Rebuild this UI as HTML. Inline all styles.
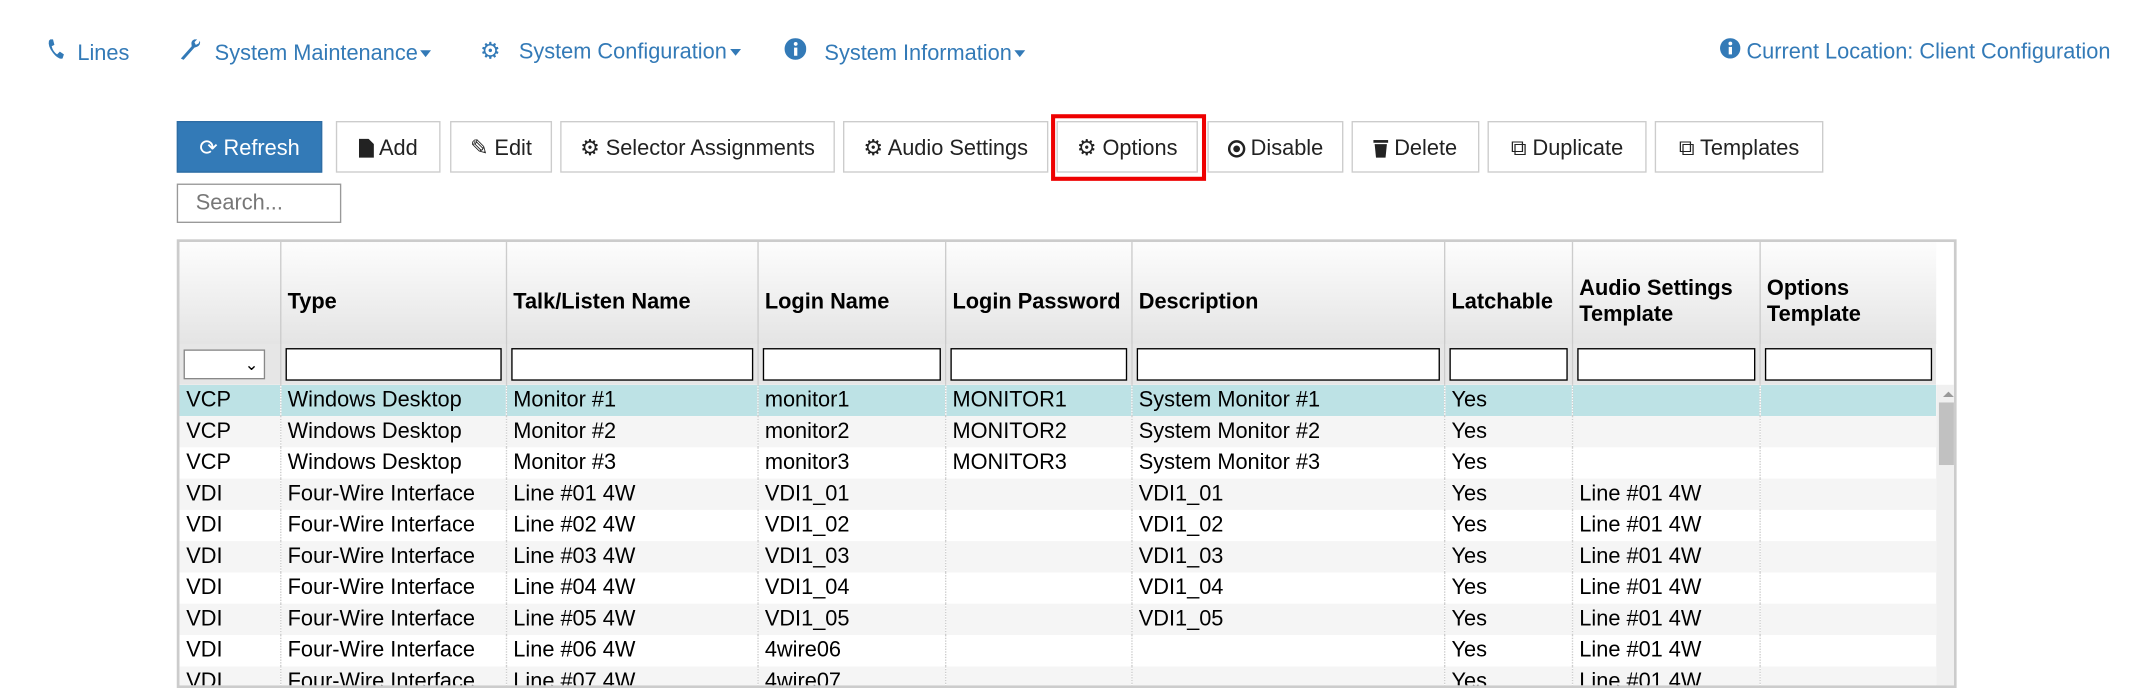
<!DOCTYPE html>
<html><head><meta charset="utf-8"><style>
html,body{margin:0;padding:0;background:#fff;overflow:hidden;width:2132px;height:678px}
#w{position:absolute;left:0;top:0;width:1568px;height:499px;transform:scale(1.3597);transform-origin:0 0;font-family:"Liberation Sans",sans-serif;font-size:16px;color:#000}
.a{position:absolute;color:#337ab7;white-space:nowrap;top:28px;line-height:20px}
.car{display:inline-block;width:0;height:0;border-left:4px solid transparent;border-right:4px solid transparent;border-top:5px solid #337ab7;vertical-align:middle;margin-left:2px}
.b{position:absolute;top:89px;height:38px;box-sizing:border-box;border:1px solid #ccc;background:#fff;line-height:39px;text-align:center;white-space:nowrap;color:#222}
.b svg{vertical-align:-2px;margin-right:4px}
table{border-collapse:collapse;table-layout:fixed}
td{padding:0 0 0 5px;height:23px;line-height:23px;white-space:nowrap;overflow:hidden;border-left:1px dotted #ccc}
th{font-weight:bold;text-align:left;padding:13px 5px 0;height:62px;border-left:1px solid #ccc;background:linear-gradient(#fdfdfd,#e4e4e4);line-height:19px;vertical-align:middle}
.f td{height:30px;background:#e6e6e6;border-left:1px solid #ccc;padding:0 3px}
.f input{width:100%;box-sizing:border-box;height:24px;border:1px solid #000;display:block}
tr.g td{background:#f5f5f5}
tr.h td{background:#bde2e5}
</style></head><body><div id="w">
<div class="a" style="left:34px"><svg width="14" height="16" viewBox="0 0 14 16"><path d="M3 1 L5 1 6 5 4 6 Q5 10 8 12 L10 10 13 12 12 15 Q9 16 5 11 Q1 6 2 2Z" fill="#337ab7"/></svg>&nbsp;&nbsp;Lines</div>
<div class="a" style="left:131px"><svg width="18" height="16" viewBox="0 0 18 16"><path d="M2 15 L10 6 Q9 2 12 1 L14 1 12 3 13 5 15 4 16 2 Q17 6 12 7 L4 16Z" fill="#337ab7"/></svg>&nbsp; System Maintenance<span class="car"></span></div>
<div class="a" style="left:353px"><span style="font-size:17px">⚙</span>&nbsp;&nbsp; System Configuration<span class="car"></span></div>
<div class="a" style="left:577px"><svg width="16" height="16"><circle cx="8" cy="8" r="8" fill="#337ab7"/><rect x="7" y="7" width="2.4" height="6" fill="#fff"/><circle cx="8.2" cy="4.3" r="1.4" fill="#fff"/></svg>&nbsp;&nbsp; System Information<span class="car"></span></div>
<div class="a" style="left:1265px"><svg width="15" height="15"><circle cx="7.5" cy="7.5" r="7.5" fill="#337ab7"/><rect x="6.4" y="6.5" width="2.4" height="5.5" fill="#fff"/><circle cx="7.6" cy="4" r="1.4" fill="#fff"/></svg> Current Location: Client Configuration</div>

<div class="b" style="left:130px;width:107px;background:#337ab7;border-color:#2e6da4;color:#fff">⟳ Refresh</div>
<div class="b" style="left:247px;width:77px"><svg width="11" height="14"><path d="M0 0H7L11 4V14H0Z" fill="#222"/></svg>Add</div>
<div class="b" style="left:331px;width:75px">✎ Edit</div>
<div class="b" style="left:412px;width:202px">⚙ Selector Assignments</div>
<div class="b" style="left:620px;width:151px">⚙ Audio Settings</div>
<div style="position:absolute;left:773px;top:84px;width:108px;height:43px;border:3px solid #e00;"></div>
<div class="b" style="left:777px;width:104px">⚙ Options</div>
<div class="b" style="left:888px;width:100px"><svg width="13" height="13"><circle cx="6.5" cy="6.5" r="5.5" fill="none" stroke="#222" stroke-width="1.8"/><circle cx="6.5" cy="6.5" r="2.5" fill="#222"/></svg>Disable</div>
<div class="b" style="left:994px;width:94px"><svg width="11" height="14"><rect x="0" y="1" width="11" height="2" fill="#222"/><path d="M1 4H10L9 14H2Z" fill="#222"/></svg>Delete</div>
<div class="b" style="left:1094px;width:117px">⧉ Duplicate</div>
<div class="b" style="left:1217px;width:124px">⧉ Templates</div>
<div style="position:absolute;left:130px;top:135px;width:121px;height:29px;box-sizing:border-box;border:1px solid #999;color:#777;padding-left:13px;line-height:27px">Search...</div>

<div style="position:absolute;left:130px;top:176px;width:1309px;height:330px;border:2px solid #ccc;box-sizing:border-box;overflow:hidden">
<table style="width:1292px">
<colgroup><col style="width:74px"><col style="width:166px"><col style="width:185px"><col style="width:138px"><col style="width:137px"><col style="width:230px"><col style="width:94px"><col style="width:138px"><col style="width:130px"></colgroup>
<tr><th style="border-left:0"></th><th>Type</th><th>Talk/Listen Name</th><th>Login Name</th><th>Login Password</th><th>Description</th><th>Latchable</th><th>Audio Settings Template</th><th>Options Template</th></tr>
<tr class="f"><td style="border-left:0"><div style="height:22px;width:60px;border:1px solid #888;background:#fff;box-sizing:border-box;text-align:right;padding-right:4px;font-size:12px;line-height:20px">⌄</div></td><td><input></td><td><input></td><td><input></td><td><input></td><td><input></td><td><input></td><td><input></td><td><input></td></tr>
<tr class="h"><td style="border-left:0">VCP</td><td>Windows Desktop</td><td>Monitor #1</td><td>monitor1</td><td>MONITOR1</td><td>System Monitor #1</td><td>Yes</td><td></td><td></td></tr>
<tr class="g"><td style="border-left:0">VCP</td><td>Windows Desktop</td><td>Monitor #2</td><td>monitor2</td><td>MONITOR2</td><td>System Monitor #2</td><td>Yes</td><td></td><td></td></tr>
<tr><td style="border-left:0">VCP</td><td>Windows Desktop</td><td>Monitor #3</td><td>monitor3</td><td>MONITOR3</td><td>System Monitor #3</td><td>Yes</td><td></td><td></td></tr>
<tr class="g"><td style="border-left:0">VDI</td><td>Four-Wire Interface</td><td>Line #01 4W</td><td>VDI1_01</td><td></td><td>VDI1_01</td><td>Yes</td><td>Line #01 4W</td><td></td></tr>
<tr><td style="border-left:0">VDI</td><td>Four-Wire Interface</td><td>Line #02 4W</td><td>VDI1_02</td><td></td><td>VDI1_02</td><td>Yes</td><td>Line #01 4W</td><td></td></tr>
<tr class="g"><td style="border-left:0">VDI</td><td>Four-Wire Interface</td><td>Line #03 4W</td><td>VDI1_03</td><td></td><td>VDI1_03</td><td>Yes</td><td>Line #01 4W</td><td></td></tr>
<tr><td style="border-left:0">VDI</td><td>Four-Wire Interface</td><td>Line #04 4W</td><td>VDI1_04</td><td></td><td>VDI1_04</td><td>Yes</td><td>Line #01 4W</td><td></td></tr>
<tr class="g"><td style="border-left:0">VDI</td><td>Four-Wire Interface</td><td>Line #05 4W</td><td>VDI1_05</td><td></td><td>VDI1_05</td><td>Yes</td><td>Line #01 4W</td><td></td></tr>
<tr><td style="border-left:0">VDI</td><td>Four-Wire Interface</td><td>Line #06 4W</td><td>4wire06</td><td></td><td></td><td>Yes</td><td>Line #01 4W</td><td></td></tr>
<tr class="g"><td style="border-left:0">VDI</td><td>Four-Wire Interface</td><td>Line #07 4W</td><td>4wire07</td><td></td><td></td><td>Yes</td><td>Line #01 4W</td><td></td></tr>
</table>
<div style="position:absolute;left:1292px;top:105px;width:15px;height:230px;background:#f0f0f0"></div>
<div style="position:absolute;left:1297px;top:110px;width:0;height:0;border-left:4px solid transparent;border-right:4px solid transparent;border-bottom:4px solid #999"></div>
<div style="position:absolute;left:1294px;top:118px;width:12px;height:46px;background:#c1c1c1"></div>
</div>
</div></body></html>
